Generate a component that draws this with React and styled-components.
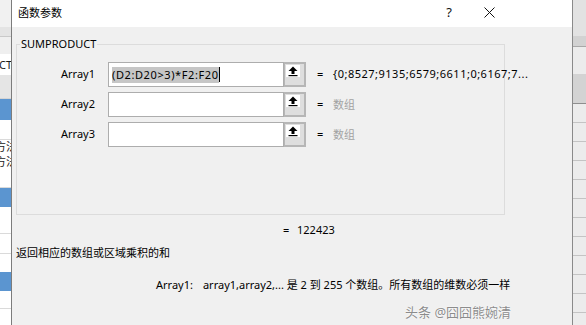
import React from "react";
import styled, { createGlobalStyle } from "styled-components";

const GlobalStyle = createGlobalStyle`
  html, body {
    margin: 0;
    padding: 0;
    background: #ffffff;
  }
  body {
    font-family: "Noto Sans", "Noto Sans CJK SC", sans-serif;
    font-size: 11px;
    color: #000000;
  }
`;

const Page = styled.div`
  position: relative;
  display: flex;
  width: 586px;
  height: 325px;
  overflow: hidden;
`;

/* spreadsheet peeking out behind the dialog */
const SheetStrip = styled.div`
  display: flex;
  flex-direction: column;
  width: ${props => props.width}px;
  flex: none;
  overflow: hidden;
`;

const SheetCell = styled.div`
  flex: none;
  height: ${props => props.h}px;
  background: ${props => props.bg || "#ffffff"};
  border-bottom: ${props => (props.line ? `1px solid ${props.line}` : "none")};
  box-sizing: border-box;
  font-size: 11px;
  line-height: ${props => props.h}px;
  white-space: nowrap;
  color: #1a1a1a;
  text-indent: ${props => props.indent || 0}px;
`;

const Dialog = styled.div`
  display: flex;
  flex-direction: column;
  width: 562px;
  flex: none;
  border-left: 1px solid #7c7c7c;
  border-right: 1px solid #8a8a8a;
  box-sizing: border-box;
  background: #f0f0f0;
`;

const TitleBar = styled.div`
  display: flex;
  align-items: center;
  height: 27px;
  background: #ffffff;
  padding: 0 63px 0 6px;
  flex: none;
`;

const Title = styled.div`
  flex: 1;
  font-size: 11px;
  padding-bottom: 3px;
`;

const CaptionButton = styled.div`
  width: 40px;
  height: 27px;
  display: flex;
  align-items: center;
  justify-content: center;
  font-size: 13px;
  color: #111;
  padding-bottom: 3px;
  box-sizing: border-box;
`;

const Body = styled.div`
  display: flex;
  flex-direction: column;
  padding: 17px 0 0 4px;
`;

const GroupBox = styled.div`
  position: relative;
  width: 489px;
  height: 171px;
  box-sizing: border-box;
  border: 1px solid #dcdcdc;
  padding: 17px 0 0 44px;
  display: flex;
  flex-direction: column;
  gap: 5px;
`;

const GroupLabel = styled.span`
  position: absolute;
  top: -9px;
  left: 3px;
  padding: 0 1px;
  background: #f0f0f0;
  font-size: 11px;
  line-height: 16px;
`;

const ArgRow = styled.div`
  display: flex;
  align-items: center;
  height: 25px;
`;

const ArgName = styled.div`
  width: 47px;
  flex: none;
  padding-bottom: 2px;
`;

const Field = styled.div`
  display: flex;
  align-items: center;
  width: 176px;
  height: 25px;
  box-sizing: border-box;
  border: 1px solid #adadad;
  background: #ffffff;
  padding-left: 3px;
  flex: none;
`;

const Selected = styled.span`
  background: #c6c6c6;
  line-height: 15px;
  padding-bottom: 1px;
  letter-spacing: 0.6px;
`;

const Caret = styled.span`
  width: 1px;
  height: 15px;
  background: #000;
`;

const PickButton = styled.div`
  width: 22px;
  height: 25px;
  box-sizing: border-box;
  border: 2px solid #b6b6b6;
  border-left-width: 1px;
  background: #dedede;
  padding: 1px 0 0 1px;
  flex: none;
`;

const PickIcon = styled.div`
  width: 14px;
  height: 12px;
  background: #ffffff;
  display: flex;
  align-items: center;
  justify-content: center;
`;

const Equals = styled.span`
  margin-left: 11px;
  width: 16px;
  flex: none;
  padding-bottom: 2px;
`;

const ArgValue = styled.span`
  color: ${props => (props.hint ? "#a2a2a2" : "#000")};
  letter-spacing: ${props => (props.hint ? 0 : 0.5)}px;
  white-space: nowrap;
  padding-bottom: 2px;
`;

const ResultRow = styled.div`
  display: flex;
  margin: 7px 0 0 267px;
  line-height: 16px;
`;

const ResultEq = styled.span`
  width: 14px;
`;

const Description = styled.div`
  margin-top: 7px;
  line-height: 16px;
`;

const ArgHelp = styled.div`
  display: flex;
  gap: 10px;
  margin: 16px 0 0 140px;
  line-height: 16px;
  white-space: nowrap;
`;

const Watermark = styled.div`
  position: absolute;
  left: 405px;
  top: 302px;
  font-size: 13px;
  color: #8c8c8c;
  text-shadow: 0 0 2px #ffffff, 0 0 1px #ffffff;
  white-space: nowrap;
`;

const UploadArrow = () => (
  <svg width="10" height="11" viewBox="0 0 10 11">
    <polygon points="5,0.5 0.5,5 9.5,5" fill="#000" />
    <rect x="3.5" y="5" width="3" height="3" fill="#000" />
    <rect x="0.5" y="9" width="9" height="1.2" fill="#000" />
  </svg>
);

const CloseGlyph = () => (
  <svg width="11" height="11" viewBox="0 0 11 11">
    <path d="M0.5 0.5 L10.5 10.5 M10.5 0.5 L0.5 10.5" stroke="#111" strokeWidth="1" />
  </svg>
);

const leftCells = [
  { h: 27, bg: "#f1f1f1" },
  { h: 10, bg: "#e4e4e4", line: "#c9c9c9" },
  { h: 17, bg: "#efefef" },
  { h: 21, bg: "#ffffff", text: "JCT", indent: -4 },
  { h: 24, bg: "#e5e5e5", line: "#d4d4d4" },
  { h: 21, bg: "#5b95d0" },
  { h: 20, bg: "#ffffff", line: "#dadada" },
  { h: 14, bg: "#ffffff", text: "方法", indent: -5 },
  { h: 16, bg: "#ffffff", text: "方法", indent: -5 },
  { h: 18, bg: "#ffffff", line: "#dadada" },
  { h: 19, bg: "#5b95d0" },
  { h: 27, bg: "#ffffff", line: "#dadada" },
  { h: 20, bg: "#ffffff", line: "#dadada" },
  { h: 18, bg: "#ffffff" },
  { h: 19, bg: "#5b95d0" },
  { h: 18, bg: "#ffffff", line: "#dadada" },
  { h: 20, bg: "#ffffff" }
];

const rightCells = [
  { h: 36, bg: "#e2e2e2" },
  { h: 11, bg: "#d2d2d2", line: "#a8a8a8" },
  { h: 27, bg: "#ececec" },
  { h: 30, bg: "#d3d3d3", line: "#8e8e8e" },
  ...Array.from({ length: 12 }, () => ({ h: 19, bg: "#ececec", line: "#c4c4c4" }))
];

const args = [
  { name: "Array1", value: "{0;8527;9135;6579;6611;0;6167;7...", filled: true },
  { name: "Array2", value: "数组" },
  { name: "Array3", value: "数组" }
];

export default function App() {
  return (
    <Page>
      <GlobalStyle />
      <SheetStrip width={11}>
        {leftCells.map((c, i) => (
          <SheetCell key={i} h={c.h} bg={c.bg} line={c.line} indent={c.indent}>
            {c.text}
          </SheetCell>
        ))}
      </SheetStrip>
      <Dialog>
        <TitleBar>
          <Title>函数参数</Title>
          <CaptionButton>?</CaptionButton>
          <CaptionButton>
            <CloseGlyph />
          </CaptionButton>
        </TitleBar>
        <Body>
          <GroupBox>
            <GroupLabel>SUMPRODUCT</GroupLabel>
            {args.map(arg => (
              <ArgRow key={arg.name}>
                <ArgName>{arg.name}</ArgName>
                <Field>
                  {arg.filled && (
                    <>
                      <Selected>(D2:D20&gt;3)*F2:F20</Selected>
                      <Caret />
                    </>
                  )}
                </Field>
                <PickButton>
                  <PickIcon>
                    <UploadArrow />
                  </PickIcon>
                </PickButton>
                <Equals>=</Equals>
                <ArgValue hint={!arg.filled}>{arg.value}</ArgValue>
              </ArgRow>
            ))}
          </GroupBox>
          <ResultRow>
            <ResultEq>=</ResultEq>
            <span>122423</span>
          </ResultRow>
          <Description>返回相应的数组或区域乘积的和</Description>
          <ArgHelp>
            <span>Array1:</span>
            <span>array1,array2,... 是 2 到 255 个数组。所有数组的维数必须一样</span>
          </ArgHelp>
        </Body>
      </Dialog>
      <SheetStrip width={14}>
        {rightCells.map((c, i) => (
          <SheetCell key={i} h={c.h} bg={c.bg} line={c.line} />
        ))}
      </SheetStrip>
      <Watermark>头条 @囧囧熊婉清</Watermark>
    </Page>
  );
}
